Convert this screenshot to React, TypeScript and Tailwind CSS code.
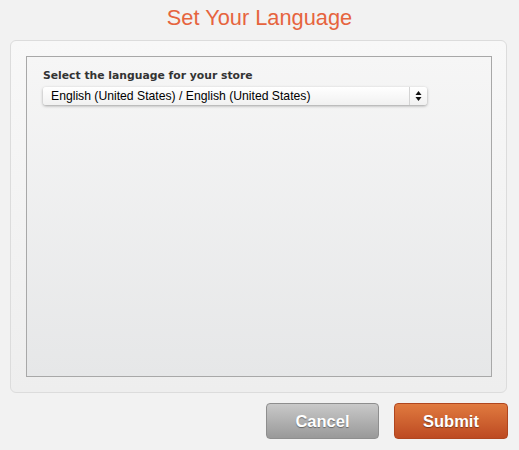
export default function App() {
  return (
    <div className="w-[519px] h-[450px] bg-[#f2f2f2] font-['Liberation_Sans',Arial,sans-serif] relative">
      <h1 className="text-center text-[21.8px] leading-[24px] pt-[6px] text-[#e6643e]">Set Your Language</h1>

      <div className="mt-[10px] ml-[10px] w-[497px] h-[353px] rounded-[6px] border border-[#dcdcdc] bg-gradient-to-b from-[#f8f8f8] to-[#eeeeee] pt-[15px] pl-[15px]">
        <div className="w-[466px] h-[321px] border border-[#a8a8a8] bg-gradient-to-b from-[#f6f6f6] to-[#e6e7e8] pt-[12px] pl-[16px]">
          <label className="block font-['DejaVu_Sans',Verdana,sans-serif] font-bold text-[10.8px] leading-[14px] text-[#333]">
            Select the language for your store
          </label>
          <div className="mt-[4px] w-[384px] h-[18px] flex items-center rounded-[3px] bg-gradient-to-b from-[#ffffff] to-[#f1f1f1] shadow-[0_1px_3px_rgba(0,0,0,0.35)]">
            <span className="flex-1 pl-[8px] text-[12.2px] text-black leading-[18px]">
              English (United States) / English (United States)
            </span>
            <div className="w-[18px] h-full border-l border-[#d4d4d4] flex flex-col items-center justify-center">
              <svg width="7" height="12" viewBox="0 0 7 12">
                <path d="M3.5 1 L6.5 5 L0.5 5 Z" fill="#111" />
                <path d="M3.5 11 L6.5 7 L0.5 7 Z" fill="#111" />
              </svg>
            </div>
          </div>
        </div>
      </div>

      <div className="flex justify-end gap-[15px] mt-[10px] pr-[11px]">
        <button className="w-[113px] h-[36px] rounded-[4px] border border-[#8e8e8e] bg-gradient-to-b from-[#c9c9c9] to-[#999999] text-white font-bold text-[16.5px] [text-shadow:0_1px_1px_rgba(0,0,0,0.4)]">
          Cancel
        </button>
        <button className="w-[114px] h-[36px] rounded-[4px] border border-[#b0461f] bg-gradient-to-b from-[#e07a3f] to-[#bd4a22] text-white font-bold text-[16.5px] [text-shadow:0_1px_1px_rgba(0,0,0,0.4)]">
          Submit
        </button>
      </div>
    </div>
  );
}
